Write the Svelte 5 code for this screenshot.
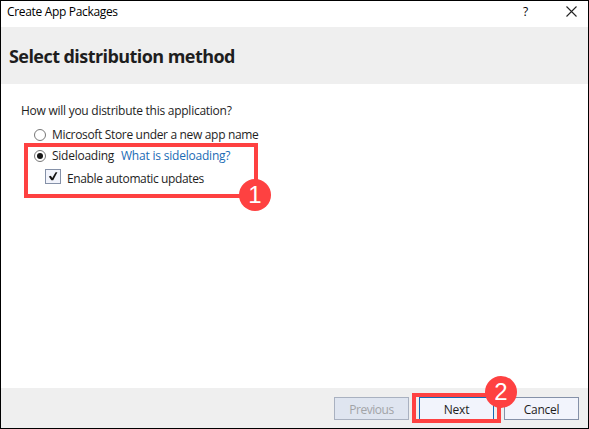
<script>
  let method = $state('sideloading');
  let updates = $state(true);
</script>

<div class="dialog">
  <div class="titlebar">
    <span class="title">Create App Packages</span>
    <span class="help">?</span>
    <svg class="close" width="11" height="11" viewBox="0 0 11 11"><path d="M.5 .5l10 10M10.5 .5l-10 10" stroke="#222" stroke-width="1.1" fill="none" /></svg>
  </div>
  <header><h1>Select distribution method</h1></header>
  <main>
    <p class="question">How will you distribute this application?</p>
    <div class="row store" role="radio" tabindex="-1" aria-checked={method === 'store'}>
      <span class="radio"></span><span class="store-label">Microsoft Store under a new app name</span>
    </div>
    <div class="row side" role="radio" tabindex="-1" aria-checked={method === 'sideloading'}>
      <span class="radio">{#if method === 'sideloading'}<i></i>{/if}</span>
      <span class="side-label">Sideloading</span><span class="link">What is sideloading?</span>
    </div>
    <div class="row auto" role="checkbox" tabindex="-1" aria-checked={updates}>
      <span class="check">
        {#if updates}<svg width="14" height="13" viewBox="0 0 14 13"><path d="M2.8 6.6L4.9 5.8L6.2 8L9.6 2.2L11.4 2.2L7.2 10.3H5.4Z" fill="#151515" /></svg>{/if}
      </span>
      <span class="auto-label">Enable automatic updates</span>
    </div>
  </main>
  <footer>
    <div class="button disabled"><span class="b1">Previous</span></div>
    <div class="button primary"><span class="b2">Next</span></div>
    <div class="button"><span class="b3">Cancel</span></div>
  </footer>
  <div class="mark one"></div>
  <div class="badge n1">1</div>
  <div class="mark two"></div>
  <div class="badge n2">2</div>
</div>

<style>
  .dialog {
    position: relative;
    box-sizing: border-box;
    width: 589px;
    height: 429px;
    border: 1px solid #000;
    background: #fff;
    color: #1e1e1e;
    font: 12px/16px "Open Sans", "Noto Sans", sans-serif;
    display: flex;
    flex-direction: column;
    overflow: hidden;
    white-space: nowrap;
  }
  .titlebar { height: 26px; display: flex; box-sizing: border-box; padding: 3px 11px 0 6px; color: #000; }
  .title { flex: 1; letter-spacing: -0.33px; }
  .help { width: 7px; margin-right: 36px; font-weight: 500; }
  .close { margin-top: 2px; }
  header { height: 57px; background: #efefef; box-sizing: border-box; padding: 17px 0 0 8px; }
  h1 { margin: 0; font-size: 18px; line-height: 24px; font-weight: 700; letter-spacing: -0.56px; }
  main { flex: 1; padding: 19px 20px 0; }
  .question { margin: 0; letter-spacing: -0.26px; }
  .row { display: flex; align-items: center; outline: 0; }
  .store { margin: 8px 0 0 13px; }
  .store-label { letter-spacing: -0.33px; }
  .side { margin: 5px 0 0 13px; }
  .side-label { width: 62px; letter-spacing: -0.25px; }
  .link { color: #1b6bb5; margin-left: 7px; letter-spacing: -0.21px; }
  .auto { margin: 6px 0 0 24px; align-items: flex-start; }
  .auto-label { padding-top: 1px; letter-spacing: -0.37px; }
  .radio {
    box-sizing: border-box;
    width: 12px;
    height: 12px;
    border: 1px solid #777;
    border-radius: 50%;
    margin-right: 6px;
    display: flex;
    align-items: center;
    justify-content: center;
  }
  .radio i { width: 6px; height: 6px; border-radius: 50%; background: #161616; }
  .check {
    box-sizing: border-box;
    width: 16px;
    height: 15px;
    border: 1px solid #8591a8;
    background: #f2f4fc;
    margin: -1px 6px 0 0;
    display: flex;
  }
  footer {
    height: 40px;
    box-sizing: border-box;
    background: #efefef;
    display: flex;
    justify-content: flex-end;
    gap: 10px;
    padding: 9px 9px 0 0;
  }
  .button {
    box-sizing: border-box;
    width: 75px;
    height: 23px;
    border: 1px solid #8591a8;
    background: #f2f4fc;
    text-align: center;
    line-height: 23px;
    letter-spacing: -0.25px;
  }
  .disabled { background: #dfe5f0; border-color: #a9b1c0; color: #a2a4a7; letter-spacing: -0.45px; }
  .primary { border-color: #1469b5; }
  .mark { position: absolute; box-sizing: border-box; border: 4px solid #fe4141; }
  .one { left: 23px; top: 142px; width: 234px; height: 55px; }
  .two { left: 411px; top: 392px; width: 89px; height: 30px; }
  .badge {
    position: absolute;
    width: 32px;
    height: 32px;
    border-radius: 50%;
    background: #fe4141;
    color: #fff;
    font: 24px/32px "Liberation Sans", sans-serif;
    text-align: center;
  }
  .n1 { left: 238px; top: 178px; }
  .n2 { left: 484px; top: 375px; }
</style>
